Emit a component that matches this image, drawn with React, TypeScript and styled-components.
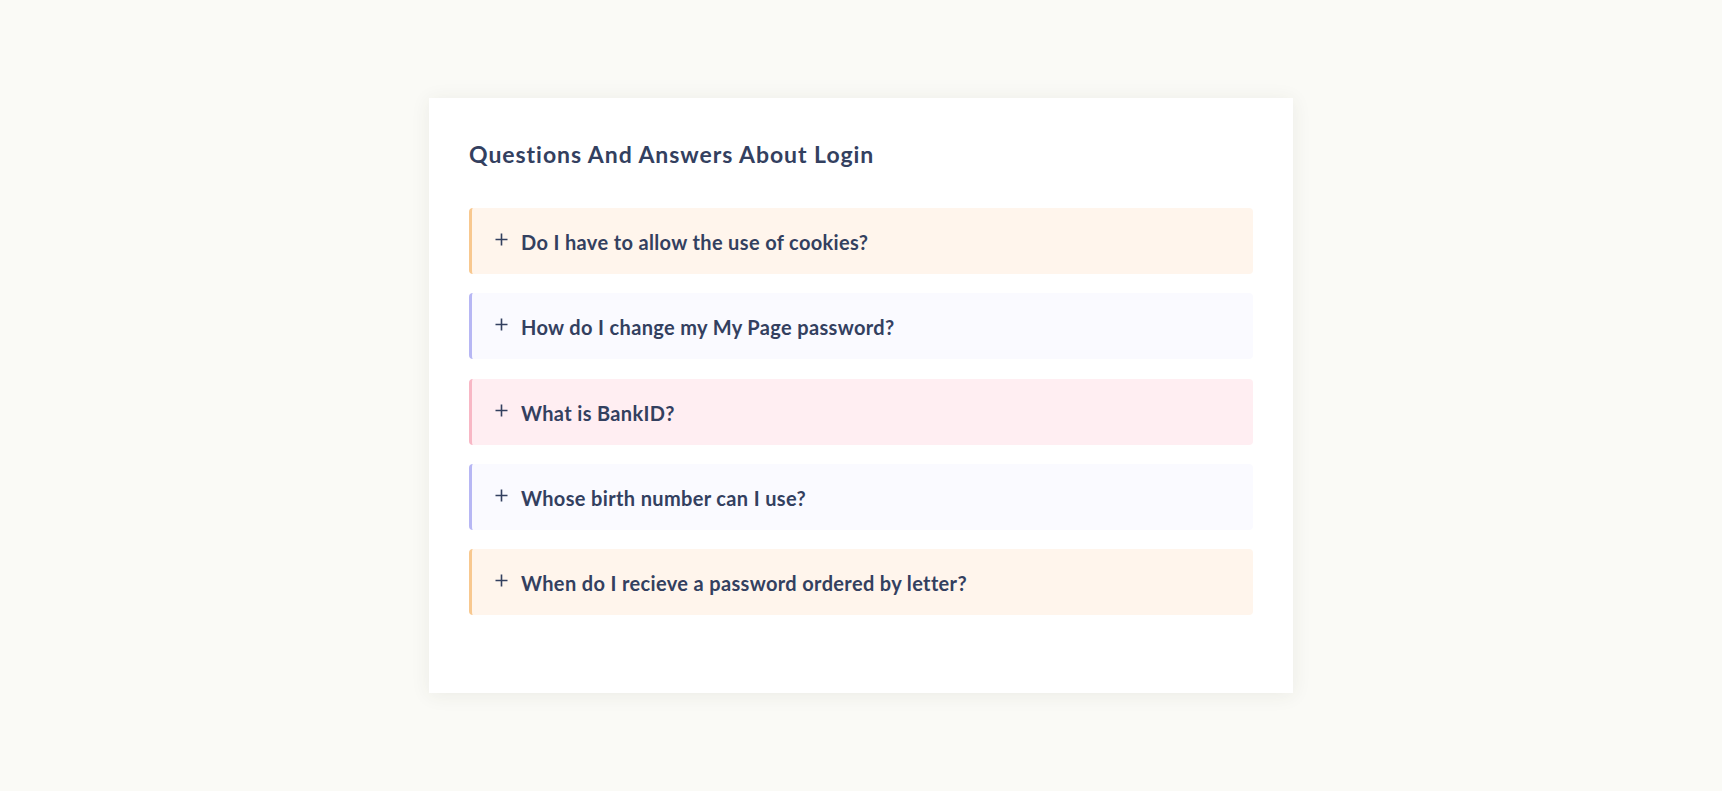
import React from "react";
import styled, { createGlobalStyle } from "styled-components";

const GlobalStyle = createGlobalStyle`
  html, body {
    margin: 0;
    padding: 0;
    background: #fafaf6;
  }
  body {
    font-family: "Lato", "Noto Sans", sans-serif;
  }
`;

const Page = styled.div`
  min-height: 100vh;
  display: flex;
  align-items: center;
  justify-content: center;
`;

const Card = styled.section`
  width: 864px;
  box-sizing: border-box;
  background: #ffffff;
  padding: 42px 40px 78px;
  box-shadow: 0 2px 18px rgba(60, 60, 40, 0.08);
`;

const Title = styled.h2`
  margin: 0 0 39px;
  height: 29px;
  font-size: 23px;
  line-height: 29px;
  font-weight: 700;
  color: #33405f;
  letter-spacing: 0.95px;
`;

const List = styled.div`
  display: flex;
  flex-direction: column;
  gap: 19.3px;
`;

type Tone = "orange" | "purple" | "pink";

const tones: Record<Tone, { bg: string; border: string }> = {
  orange: { bg: "#fff5ec", border: "#f8c88f" },
  purple: { bg: "#fafaff", border: "#b7b7f4" },
  pink: { bg: "#ffeef2", border: "#f8b7c5" },
};

const Item = styled.div<{ $tone: Tone }>`
  height: 66px;
  box-sizing: border-box;
  display: flex;
  align-items: center;
  gap: 13px;
  padding: 0 20px 0 23px;
  border-left: 3px solid ${(p) => tones[p.$tone].border};
  border-radius: 4px;
  background: ${(p) => tones[p.$tone].bg};
  cursor: pointer;
`;

const PlusIcon = styled.svg`
  flex: none;
  width: 13px;
  height: 13px;
  margin-top: -3px;
  color: #33405f;
`;

const Question = styled.span`
  font-size: 20px;
  font-weight: 700;
  color: #33405f;
  line-height: 26px;
  letter-spacing: 0.35px;
  padding-top: 2px;
`;

const Plus = () => (
  <PlusIcon viewBox="0 0 13 13" fill="none">
    <path d="M6.5 0.5v12M0.5 6.5h12" stroke="currentColor" strokeWidth="1.6" />
  </PlusIcon>
);

const questions: { text: string; tone: Tone }[] = [
  { text: "Do I have to allow the use of cookies?", tone: "orange" },
  { text: "How do I change my My Page password?", tone: "purple" },
  { text: "What is BankID?", tone: "pink" },
  { text: "Whose birth number can I use?", tone: "purple" },
  { text: "When do I recieve a password ordered by letter?", tone: "orange" },
];

export default function App() {
  return (
    <>
      <GlobalStyle />
      <Page>
        <Card>
          <Title>Questions And Answers About Login</Title>
          <List>
            {questions.map((q) => (
              <Item key={q.text} $tone={q.tone}>
                <Plus />
                <Question>{q.text}</Question>
              </Item>
            ))}
          </List>
        </Card>
      </Page>
    </>
  );
}
